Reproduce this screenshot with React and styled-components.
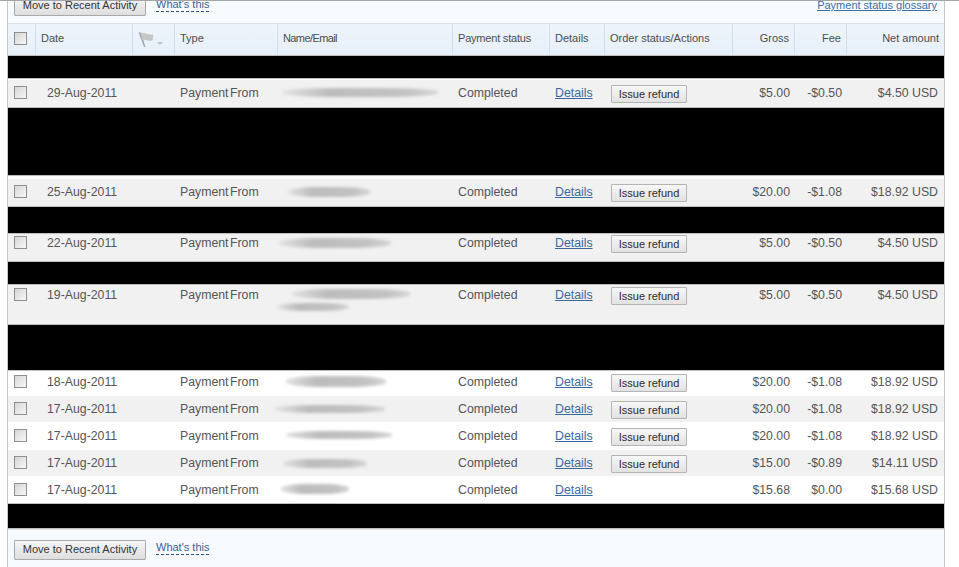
import React from 'react';
import styled, { createGlobalStyle } from 'styled-components';

const GlobalStyle = createGlobalStyle`
  html, body {
    margin: 0;
    padding: 0;
    background: #fff;
  }
  body {
    font-family: "Liberation Sans", Arial, sans-serif;
    overflow: hidden;
  }
`

const Page = styled.div`
  width: 959px;
  height: 567px;
  overflow: hidden;
  box-sizing: border-box;
  border-top: 1px solid #a6a6a6;
  padding-left: 7px;
`

const Panel = styled.div`
  width: 938px;
  height: 566px;
  box-sizing: border-box;
  border-left: 1px solid #c6c6c6;
  border-right: 1px solid #c6c6c6;
  background: #f6f9fd;
`

const ToolBar = styled.div`
  display: flex;
  justify-content: space-between;
  align-items: flex-end;
  box-sizing: border-box;
  height: 23px;
  padding: 0 7px 7px 6px;
  overflow: hidden;
  background: #f8fbfe;
  border-bottom: 1px solid #dbe1e8;
`

const BottomBar = styled.div`
  display: flex;
  align-items: flex-start;
  gap: 10px;
  padding: 10px 6px 0 6px;
  border-top: 2px solid #e2e2e2;
`

const ToolGroup = styled.div`
  display: flex;
  align-items: flex-end;
  gap: 10px;
`

const MoveButton = styled.button`
  box-sizing: border-box;
  width: 132px;
  height: 20px;
  padding: 0 0 2px;
  flex: none;
  font-family: inherit;
  font-size: 11px;
  color: #333;
  background: linear-gradient(#f6f6f6, #dedede);
  border: 1px solid #a9a9a9;
  border-radius: 1px;
`

const HelpLink = styled.a`
  font-size: 11px;
  line-height: 13px;
  margin-bottom: 4px;
  margin-top: ${p => p.$top || 0}px;
  color: #3a5f97;
  border-bottom: 1px dashed #2b4f81;
`

const GlossaryLink = styled.a`
  font-size: 11px;
  line-height: 13px;
  margin-bottom: 4px;
  color: #3a6ea5;
  text-decoration: underline;
`

const Table = styled.table`
  width: 936px;
  table-layout: fixed;
  border-collapse: separate;
  border-spacing: 0;
`

const HeadRow = styled.tr`
  height: 32px;
`

const HeadCell = styled.th`
  box-sizing: border-box;
  padding: 0 ${p => (p.$right ? 5 : 0)}px 4px ${p => (p.$right ? 0 : p.$left ?? 5)}px;
  font-size: 11px;
  font-weight: normal;
  letter-spacing: ${p => p.$track || 0}px;
  color: #4d4d4d;
  text-align: ${p => (p.$right ? 'right' : 'left')};
  white-space: nowrap;
  background: linear-gradient(#eef4fb, #e6eff9);
  border-right: ${p => (p.$last ? 'none' : '1px solid #d2deeb')};
`

const BlackRow = styled.tr`
  height: ${p => p.$h}px;
`

const BlackCell = styled.td`
  position: relative;
  padding: 0;
  background: #000;
  box-shadow: 0 1px 0 #bdbdbd, 0 -1px 0 #bdbdbd;
`

const DataRow = styled.tr`
  height: ${p => p.$h}px;
`

const Cell = styled.td`
  box-sizing: border-box;
  vertical-align: top;
  padding: ${p => p.$pad}px ${p => (p.$right ? p.$right : 0)}px 0 ${p => p.$left ?? 5}px;
  font-size: 12.3px;
  line-height: 14px;
  color: #555;
  text-align: ${p => (p.$right ? 'right' : 'left')};
  white-space: nowrap;
  background: ${p => (p.$shade ? '#f1f1f1' : '#fff')};
  border-top: ${p => p.$band}px solid #fff;
  border-bottom: 1px solid #fff;
`

const TypeText = styled.span`
  word-spacing: -2px;
`

const CheckBox = styled.input.attrs({ type: 'checkbox' })`
  appearance: none;
  display: block;
  box-sizing: border-box;
  width: 13px;
  height: 13px;
  margin: 0 0 0 6px;
  background: linear-gradient(135deg, #d6d6d6, #f7f7f7);
  border: 1px solid #8f8f8f;
`

const DetailsLink = styled.a`
  color: #3b689f;
  text-decoration: underline;
`

const RefundButton = styled.button`
  display: block;
  box-sizing: border-box;
  width: 76px;
  height: 18px;
  margin: -1px 0 0 1px;
  padding: 0;
  font-family: inherit;
  font-size: 11px;
  color: #2b2b2b;
  background: linear-gradient(#f7f7f7, #e2e2e2);
  border: 1px solid #b4b4b4;
  border-radius: 1px;
`

const Smudge = styled.div`
  width: ${p => p.$w}px;
  height: ${p => p.$h}px;
  margin: ${p => p.$y}px 0 0 ${p => p.$x}px;
  border-radius: 40%;
  background: linear-gradient(90deg, #e2e2e2, #bcbcbc 30%, #c2c2c2 80%, #d6d6d6);
  filter: blur(1.5px);
`

const FlagIcon = () => (
  <svg width="26" height="16" viewBox="0 0 26 16" style={{ display: 'block' }}>
    <path d="M0.5 0.5 L3 0.5 L7.5 15 L6 15 Z" fill="#a9a9a9" />
    <path d="M2.5 1 C6 0 10 3.5 15.5 2.5 L14.5 8.5 C10 9.5 7 7 4.5 8 Z" fill="#c6c6c6" />
    <path d="M19 10 L25 10 L22 13 Z" fill="#b9c3cf" />
  </svg>
)

const FlagHolder = styled.div`
  margin-top: 3px;
`

const columns = [28, 97, 42, 103, 175, 97, 55, 128, 62, 52, 97]

const groups = [
  { black: 22 },
  { date: '29-Aug-2011', pad: 6, band: 2, h: 30, shade: true, gross: '$5.00', fee: '-$0.50', net: '$4.50 USD', marks: [{ x: 4, y: 2, w: 156, h: 9 }] },
  { black: 67 },
  { date: '25-Aug-2011', pad: 6, band: 4, h: 32, shade: true, gross: '$20.00', fee: '-$1.08', net: '$18.92 USD', marks: [{ x: 10, y: 2, w: 82, h: 10 }] },
  { black: 26 },
  { date: '22-Aug-2011', pad: 2, band: 1, h: 29, shade: true, gross: '$5.00', fee: '-$0.50', net: '$4.50 USD', marks: [{ x: 1, y: 2, w: 112, h: 10 }] },
  { black: 22 },
  { date: '19-Aug-2011', pad: 4, band: 0, h: 41, shade: true, gross: '$5.00', fee: '-$0.50', net: '$4.50 USD', marks: [{ x: 14, y: 1, w: 118, h: 10 }, { x: -1, y: 4, w: 72, h: 8 }] },
  { black: 45 },
  { date: '18-Aug-2011', pad: 5, band: 0, h: 26, gross: '$20.00', fee: '-$1.08', net: '$18.92 USD', marks: [{ x: 8, y: 1, w: 100, h: 11 }] },
  { date: '17-Aug-2011', pad: 6, band: 0, h: 27, shade: true, gross: '$20.00', fee: '-$1.08', net: '$18.92 USD', marks: [{ x: -3, y: 3, w: 110, h: 8 }] },
  { date: '17-Aug-2011', pad: 6, band: 0, h: 27, gross: '$20.00', fee: '-$1.08', net: '$18.92 USD', marks: [{ x: 8, y: 2, w: 106, h: 8 }] },
  { date: '17-Aug-2011', pad: 6, band: 0, h: 27, shade: true, gross: '$15.00', fee: '-$0.89', net: '$14.11 USD', marks: [{ x: 5, y: 3, w: 84, h: 9 }] },
  { date: '17-Aug-2011', pad: 6, band: 0, h: 27, gross: '$15.68', fee: '$0.00', net: '$15.68 USD', noRefund: true, marks: [{ x: 3, y: 1, w: 68, h: 10 }] },
  { black: 24 },
]

const Row = ({ row }) => {
  const cell = { $pad: row.pad, $shade: row.shade, $band: row.band }
  return (
    <DataRow $h={row.h}>
      <Cell {...cell} $left={0}><CheckBox /></Cell>
      <Cell {...cell} $left={11} colSpan={2}>{row.date}</Cell>
      <Cell {...cell}><TypeText>Payment From</TypeText></Cell>
      <Cell {...cell} $left={0}>
        {row.marks.map((m, i) => (
          <Smudge key={i} $x={m.x} $y={m.y} $w={m.w} $h={m.h} />
        ))}
      </Cell>
      <Cell {...cell}>Completed</Cell>
      <Cell {...cell}><DetailsLink href="#">Details</DetailsLink></Cell>
      <Cell {...cell}>{!row.noRefund && <RefundButton>Issue refund</RefundButton>}</Cell>
      <Cell {...cell} $right={5} $left={0}>{row.gross}</Cell>
      <Cell {...cell} $right={5} $left={0}>{row.fee}</Cell>
      <Cell {...cell} $right={6} $left={0}>{row.net}</Cell>
    </DataRow>
  )
}

export default function App() {
  return (
    <>
      <GlobalStyle />
      <Page>
        <Panel>
          <ToolBar>
            <ToolGroup>
              <MoveButton>Move to Recent Activity</MoveButton>
              <HelpLink>What's this</HelpLink>
            </ToolGroup>
            <GlossaryLink href="#">Payment status glossary</GlossaryLink>
          </ToolBar>
          <Table>
            <colgroup>
              {columns.map((w, i) => <col key={i} width={w} />)}
            </colgroup>
            <thead>
              <HeadRow>
                <HeadCell $left={0}><CheckBox /></HeadCell>
                <HeadCell>Date</HeadCell>
                <HeadCell><FlagHolder><FlagIcon /></FlagHolder></HeadCell>
                <HeadCell>Type</HeadCell>
                <HeadCell $track={-0.6}>Name/Email</HeadCell>
                <HeadCell $track={-0.2}>Payment status</HeadCell>
                <HeadCell>Details</HeadCell>
                <HeadCell>Order status/Actions</HeadCell>
                <HeadCell $right>Gross</HeadCell>
                <HeadCell $right>Fee</HeadCell>
                <HeadCell $right $last>Net amount</HeadCell>
              </HeadRow>
            </thead>
            <tbody>
              {groups.map((row, i) => (
                row.black
                  ? <BlackRow key={i} $h={row.black}><BlackCell colSpan={11} /></BlackRow>
                  : <Row key={i} row={row} />
              ))}
            </tbody>
          </Table>
          <BottomBar>
            <MoveButton>Move to Recent Activity</MoveButton>
            <HelpLink $top={1}>What's this</HelpLink>
          </BottomBar>
        </Panel>
      </Page>
    </>
  );
}
